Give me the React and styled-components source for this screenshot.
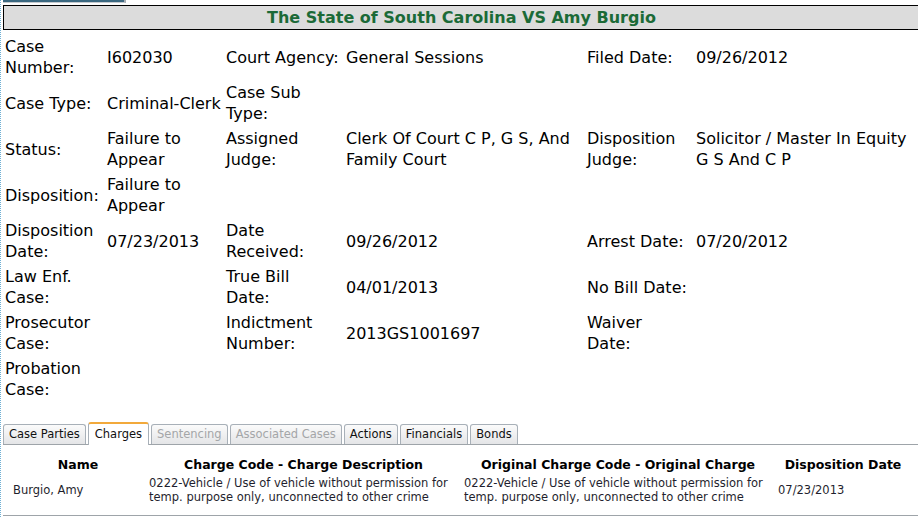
import styled, { createGlobalStyle, css } from 'styled-components';

const GlobalStyle = createGlobalStyle`
    html, body {
        margin: 0;
        padding: 0;
        background: #fff;
        overflow: hidden;
    }
    body {
        font-family: "DejaVu Sans", Verdana, sans-serif;
        color: #000;
    }
`;

// "|" marks where the original page breaks a label onto a second line
const details = [
    [['Case Number:', 'I602030'], ['Court Agency:', 'General Sessions'], ['Filed Date:', '09/26/2012']],
    [['Case Type:', 'Criminal-Clerk'], ['Case Sub Type:', ''], ['', '']],
    [['Status:', 'Failure to Appear'], ['Assigned Judge:', 'Clerk Of Court C P, G S, And Family Court'], ['Disposition Judge:', 'Solicitor / Master In Equity G S And C P']],
    [['Disposition:', 'Failure to Appear'], ['', ''], ['', '']],
    [['Disposition Date:', '07/23/2013'], ['Date Received:', '09/26/2012'], ['Arrest Date:', '07/20/2012']],
    [['Law Enf. Case:', ''], ['True Bill|Date:', '04/01/2013'], ['No Bill Date:', '']],
    [['Prosecutor Case:', ''], ['Indictment Number:', '2013GS1001697'], ['Waiver|Date:', '']],
    [['Probation Case:', ''], ['', ''], ['', '']],
];

const detailCols = [102, 119, 120, 241, 109, 226];
const chargeCols = [136, 315, 314, 136];

const tabs = [
    { label: 'Case Parties' },
    { label: 'Charges', active: true },
    { label: 'Sentencing', disabled: true },
    { label: 'Associated Cases', disabled: true },
    { label: 'Actions' },
    { label: 'Financials' },
    { label: 'Bonds' },
];

const charges = [
    {
        name: 'Burgio, Amy',
        code: '0222-Vehicle / Use of vehicle without permission for temp. purpose only, unconnected to other crime',
        original: '0222-Vehicle / Use of vehicle without permission for temp. purpose only, unconnected to other crime',
        date: '07/23/2013',
    },
];

const renderLabel = (text) => {
    const parts = text.split('|');
    return parts.map((p, i) => (
        <span key={i}>
            {p}
            {i < parts.length - 1 && <br />}
        </span>
    ));
};

const App = () => {
    return (
        <Frame>
            <GlobalStyle />
            <TopBar />
            <TitleBox>The State of South Carolina VS Amy Burgio</TitleBox>

            <DetailTable>
                <colgroup>
                    {detailCols.map((w, i) => <Col key={i} $w={w} />)}
                </colgroup>
                <tbody>
                    {details.map((row, i) => (
                        <DetailRow key={i}>
                            {row.map(([label, value], j) => [
                                <Cell key={j + 'l'}>{renderLabel(label)}</Cell>,
                                <Cell key={j + 'v'}>{value}</Cell>,
                            ])}
                        </DetailRow>
                    ))}
                </tbody>
            </DetailTable>

            <TabBar>
                {tabs.map(t => (
                    <Tab key={t.label} $active={t.active} $disabled={t.disabled}>
                        {t.label}
                    </Tab>
                ))}
            </TabBar>

            <Panel>
                <ChargeTable>
                    <colgroup>
                        {chargeCols.map((w, i) => <Col key={i} $w={w} />)}
                    </colgroup>
                    <thead>
                        <tr>
                            <Th>Name</Th>
                            <Th>Charge Code - Charge Description</Th>
                            <Th>Original Charge Code - Original Charge</Th>
                            <Th>Disposition Date</Th>
                        </tr>
                    </thead>
                    <tbody>
                        {charges.map(c => (
                            <tr key={c.name}>
                                <Td>{c.name}</Td>
                                <Td>{c.code}</Td>
                                <Td>{c.original}</Td>
                                <Td>{c.date}</Td>
                            </tr>
                        ))}
                    </tbody>
                </ChargeTable>
            </Panel>
        </Frame>
    );
};

export default App;

const Frame = styled.div`
    width: 940px;
    height: 517px;
    border-left: 1px dotted #6fb0d4;
    padding-left: 1px;
`;

const TopBar = styled.div`
    width: 121px;
    height: 2px;
    margin-left: 1px;
    background: #3b6880;
    border-right: 2px solid #a7adb3;
    border-bottom: 1px solid #c4c9cd;
`;

const TitleBox = styled.div`
    margin: 2px 0 0 1px;
    width: 915px;
    height: 23px;
    border: 1px solid #000;
    background: #dcdcdc;
    color: #1b6a37;
    font-weight: bold;
    font-size: 16px;
    line-height: 23px;
    text-align: center;
`;

const Col = styled.col`
    width: ${props => props.$w}px;
`;

const DetailTable = styled.table`
    margin: 4px 0 0 1px;
    width: 917px;
    table-layout: fixed;
    border-collapse: collapse;
    font-size: 16px;
    line-height: 21px;
`;

const DetailRow = styled.tr`
    height: 46px;
`;

const Cell = styled.td`
    padding: 2px;
    vertical-align: middle;
    color: #000;
`;

const TabBar = styled.div`
    display: flex;
    align-items: flex-end;
    gap: 2px;
    margin: 20px 0 0 1px;
    height: 22px;
    border-bottom: 1px solid #9ea4a9;
`;

const Tab = styled.div`
    height: 20px;
    padding: 0 5px;
    box-sizing: border-box;
    border: 1px solid #a8b0b8;
    border-bottom: none;
    border-radius: 3px 3px 0 0;
    background: linear-gradient(#fbfbfb, #e4e5e7);
    font-size: 11.5px;
    line-height: 19px;
    color: #111;
    white-space: nowrap;

    ${props => props.$disabled && css`
        color: #a4a6a8;
    `}

    ${props => props.$active && css`
        height: 23px;
        margin-bottom: -1px;
        border-top: 2px solid #f2a93b;
        background: #fff;
        line-height: 21px;
        padding: 0 6px;
    `}
`;

const Panel = styled.div`
    width: 917px;
    margin-left: 1px;
    padding: 11px 0 11px;
    border-bottom: 1px solid #9ea4a9;
`;

const ChargeTable = styled.table`
    margin-left: 7px;
    width: 901px;
    table-layout: fixed;
    border-collapse: collapse;
`;

const Th = styled.th`
    padding: 1px 2px;
    font-size: 12.5px;
    font-weight: bold;
    text-align: center;
    color: #000;
`;

const Td = styled.td`
    padding: 3px 2px 0 3px;
    font-size: 11.5px;
    line-height: 14px;
    color: #1f1f2e;
    vertical-align: middle;
`;
